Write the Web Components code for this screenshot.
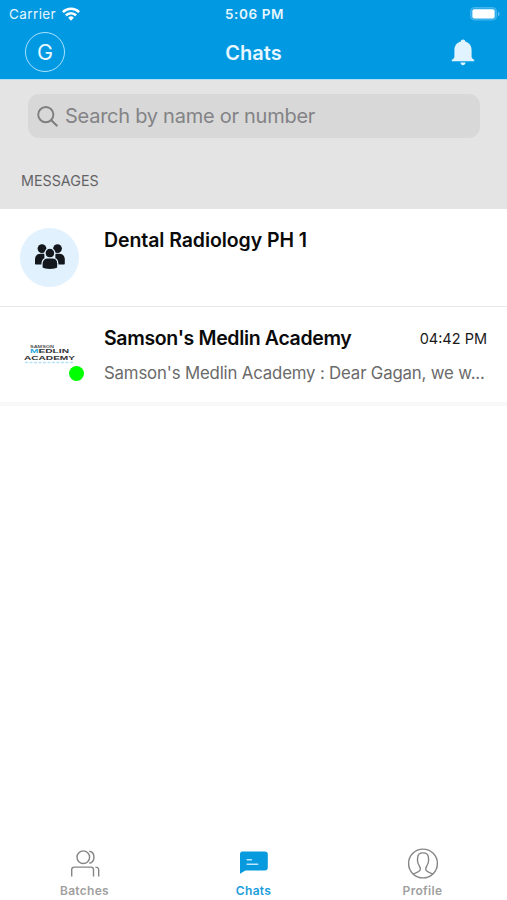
<!DOCTYPE html>
<html lang="en">
<head>
<meta charset="utf-8">
<meta name="viewport" content="width=device-width, initial-scale=1">
<title>Chats</title>
<style>
    html, body {
        margin: 0;
        height: 100%;
        overflow: hidden;
        background: #fff;
        font-family: Inter, "Liberation Sans", sans-serif;
    }
</style>
</head>
<body>
<chat-app></chat-app>

<script>
class StatusBar extends HTMLElement {
    connectedCallback() {
        let shadowRoot = this.attachShadow({ mode: 'open' });
        shadowRoot.innerHTML = `
        <style>
            :host {
                display: grid;
                grid-template-columns: 1fr auto 1fr;
                align-items: center;
                height: 27px;
                padding: 0 7px 0 9px;
                box-sizing: border-box;
                color: #e6f6ff;
                line-height: 27px;
            }
            .left {
                display: flex;
                align-items: center;
                gap: 6px;
            }
            .carrier { font-size: 13.5px; letter-spacing: 0.4px; padding-top: 1px; }
            .time { font-weight: 600; font-size: 13.5px; letter-spacing: 0.6px; padding-top: 1px; }
            .battery { justify-self: end; }
            svg { display: block; }
        </style>
        <div class="left">
            <span class="carrier">Carrier</span>
            <svg width="18" height="14" viewBox="0 0 18 14" fill="none" stroke="#fff" stroke-width="2.6">
                <path d="M0.9 5.2a11.4 11.4 0 0 1 16.2 0"/>
                <path d="M3.9 8.4a7.2 7.2 0 0 1 10.2 0"/>
                <path d="M9 13.8l-2.8-3.1a4 4 0 0 1 5.6 0z" fill="#fff" stroke="none"/>
            </svg>
        </div>
        <span class="time">5:06 PM</span>
        <svg class="battery" width="30" height="14" viewBox="0 0 30 14">
            <rect x="0.5" y="0.5" width="26" height="12.5" rx="3.8" fill="#2dabeb" stroke="#45b5ee"/>
            <rect x="2.4" y="2.2" width="22.2" height="9.2" rx="2" fill="#fff"/>
            <path d="M28 4.800c2 .9 2 3.500 0 4.400z" fill="#66c3f0"/>
        </svg>
        `;
    }
}

customElements.define("status-bar", StatusBar);


class NavBar extends HTMLElement {
    connectedCallback() {
        let shadowRoot = this.attachShadow({ mode: 'open' });
        shadowRoot.innerHTML = `
        <style>
            :host {
                display: grid;
                grid-template-columns: 1fr auto 1fr;
                align-items: center;
                height: 52px;
                padding: 0 32px 2px 25px;
                box-sizing: border-box;
                color: #e8f7ff;
            }
            .avatar {
                width: 40px;
                height: 40px;
                box-sizing: border-box;
                border: 1.5px solid #a9e2ff;
                border-radius: 50%;
                display: flex;
                align-items: center;
                justify-content: center;
                font-size: 21.5px;
            }
            .title { font-size: 20px; font-weight: 600; padding: 1px 0 0 7px; }
            .bell { justify-self: end; display: block; }
        </style>
        <div class="avatar">G</div>
        <div class="title"><slot></slot></div>
        <svg class="bell" width="24" height="27" viewBox="0 0 24 27" fill="#e0f3ff">
            <path d="M12 0.5c1.500 0 2.100.9 2.200 2.100 3.900 1 6.400 4.300 6.400 8.500v7.200l1.600 2.200h1v1.700H.8v-1.700h1l1.600-2.200v-7.200c0-4.200 2.500-7.500 6.400-8.500.1-1.200.7-2.100 2.200-2.100z"/>
            <path d="M9.400 23.400h5.200c-.3 1.800-1.300 2.800-2.600 2.800s-2.300-1-2.600-2.800z"/>
        </svg>
        `;
    }
}

customElements.define("nav-bar", NavBar);


class SearchBox extends HTMLElement {
    connectedCallback() {
        let shadowRoot = this.attachShadow({ mode: 'open' });
        shadowRoot.innerHTML = `
        <style>
            :host {
                display: flex;
                align-items: center;
                gap: 7px;
                height: 44px;
                margin: 0 27px 0 28px;
                padding-left: 9px;
                box-sizing: border-box;
                background: #d8d8d8;
                border-radius: 11px;
                color: #838386;
                font-size: 20px;
            }
            .label { letter-spacing: -0.26px; }
            svg { display: block; }
        </style>
        <svg width="21" height="21" viewBox="0 0 21 21" fill="none" stroke="#7f7f82" stroke-width="1.9" stroke-linecap="round">
            <circle cx="8.8" cy="8.6" r="7.600"/>
            <path d="M14.3 14.2l5.400 5.300" stroke-width="2.2"/>
        </svg>
        <span class="label"><slot></slot></span>
        `;
    }
}

customElements.define("search-box", SearchBox);


class ChatRow extends HTMLElement {
    connectedCallback() {
        let shadowRoot = this.attachShadow({ mode: 'open' });
        shadowRoot.innerHTML = `
        <style>
            :host {
                display: flex;
                gap: 25px;
                height: 98px;
                padding: 19px 20px 0 20px;
                box-sizing: border-box;
                border-bottom: 1px solid #e8e8e8;
                background: #fff;
            }
            :host([last]) {
                height: 99px;
                border-bottom: 4px solid #f8f8f8;
            }
            .body {
                flex: 1;
                min-width: 0;
            }
            .top {
                display: flex;
                justify-content: space-between;
                align-items: center;
                height: 24px;
            }
            .name {
                font-size: 19.5px;
                font-weight: 600;
                color: #0a0a0a;
                white-space: nowrap;
                letter-spacing: var(--name-spacing, -0.34px);
            }
            .time {
                font-size: 14.5px;
                color: #1a1a1a;
                white-space: nowrap;
            }
            .message {
                margin-top: 11px;
                height: 24px;
                line-height: 24px;
                font-size: 16.8px;
                letter-spacing: -0.16px;
                color: #6a6a6a;
                white-space: nowrap;
            }
        </style>
        <slot name="avatar"></slot>
        <div class="body">
            <div class="top">
                <span class="name"><slot name="name"></slot></span>
                <span class="time"><slot name="time"></slot></span>
            </div>
            <div class="message"><slot></slot></div>
        </div>
        `;
    }
}

customElements.define("chat-row", ChatRow);


class GroupAvatar extends HTMLElement {
    connectedCallback() {
        let shadowRoot = this.attachShadow({ mode: 'open' });
        shadowRoot.innerHTML = `
        <style>
            :host {
                display: flex;
                align-items: center;
                justify-content: center;
                flex: none;
                width: 59px;
                height: 59px;
                border-radius: 50%;
                background: #e1f1fe;
            }
            svg { display: block; margin-bottom: 1px; }
        </style>
        <svg width="32" height="28" viewBox="0 0 32 28" fill="#14181d">
            <circle cx="8" cy="5.6" r="4.4"/>
            <circle cx="23.5" cy="5.6" r="4.4"/>
            <path d="M1 20.8v-4.300c0-3.600 2.200-5.700 5.400-5.700h4v10.700h-8.600c-.5 0-.8-.3-.8-.7z"/>
            <path d="M30.8 20.8v-4.300c0-3.600-2.200-5.700-5.400-5.700h-4v10.700h8.600c.5 0 .8-.3.800-.7z"/>
            <g stroke="#e1f1fe" stroke-width="1.2">
                <circle cx="15.9" cy="10.1" r="4.9"/>
                <path d="M8 24.8v-4c0-3.800 2.300-5.800 5.500-5.800h4.800c3.200 0 5.500 2 5.500 5.800v4c-1.300 1-4.500 1.700-7.900 1.700s-6.600-.7-7.900-1.700z"/>
            </g>
        </svg>
        `;
    }
}

customElements.define("group-avatar", GroupAvatar);


class AcademyAvatar extends HTMLElement {
    connectedCallback() {
        let shadowRoot = this.attachShadow({ mode: 'open' });
        shadowRoot.innerHTML = `
        <style>
            :host {
                display: block;
                flex: none;
                position: relative;
                width: 59px;
                height: 59px;
            }
            .online {
                position: absolute;
                right: -5px;
                bottom: 4px;
                width: 15px;
                height: 15px;
                border-radius: 50%;
                background: #00ff00;
            }
            svg { display: block; }
            text { font-family: "Liberation Sans", sans-serif; font-weight: 700; }
        </style>
        <svg width="59" height="59" viewBox="0 0 59 59">
            <text x="10" y="21.7" font-size="3" fill="#555" textLength="24" lengthAdjust="spacingAndGlyphs">SAMSON</text>
            <text x="10" y="27.4" font-size="5.6" fill="#333" textLength="39" lengthAdjust="spacingAndGlyphs"><tspan fill="#29a9e0">M</tspan>EDLIN</text>
            <text x="4" y="33.7" font-size="5.6" fill="#333" textLength="51" lengthAdjust="spacingAndGlyphs">ACADEMY</text>
            <path d="M5 36.5h49" stroke="#b5e2f6" stroke-width="1.4" stroke-dasharray="3 1.5"/>
        </svg>
        <div class="online"></div>
        `;
    }
}

customElements.define("academy-avatar", AcademyAvatar);


class TabItem extends HTMLElement {
    connectedCallback() {
        let shadowRoot = this.attachShadow({ mode: 'open' });
        shadowRoot.innerHTML = `
        <style>
            :host {
                display: flex;
                flex-direction: column;
                align-items: center;
                flex: 1;
                color: #a0a0a0;
            }
            :host([active]) { color: #1c9ddb; }
            .icon {
                height: 32px;
                display: flex;
                align-items: center;
            }
            .label {
                margin-top: 4px;
                font-size: 12px;
                line-height: 16px;
                font-weight: 600;
                letter-spacing: 0.3px;
            }
        </style>
        <div class="icon"><slot name="icon"></slot></div>
        <div class="label"><slot></slot></div>
        `;
    }
}

customElements.define("tab-item", TabItem);


class TabBar extends HTMLElement {
    connectedCallback() {
        let shadowRoot = this.attachShadow({ mode: 'open' });
        shadowRoot.innerHTML = `
        <style>
            :host {
                display: flex;
                height: 53px;
                background: #fff;
            }
            svg { display: block; fill: none; stroke: #858585; stroke-width: 1.4; }
        </style>
        <tab-item>
            <svg slot="icon" width="32" height="32" viewBox="0 0 32 32">
                <circle cx="14.3" cy="10.2" r="6.3"/>
                <path d="M20.300 4.300c6.200 1.100 6.200 10.600 0 11.900"/>
                <path d="M2.700 29.500v-6.800q0-2.600 2.600-2.600h16.600q2.600 0 2.600 2.600v6.800"/>
                <path d="M26.400 20.100q3.300 0 3.300 3v6.400"/>
            </svg>
            Batches
        </tab-item>
        <tab-item active>
            <svg slot="icon" width="32" height="32" viewBox="0 0 32 32">
                <path d="M4.500 4.600h22.300c2 0 3 1.100 3 3v13c0 2-1 3-3 3H7.400L2 26.800V7.500c0-1.900.8-2.900 2.500-2.900z" fill="#079ade" stroke="none"/>
                <path d="M9.200 12.700h4.200M9.200 17.300h10.500" stroke="#b9e8ff" stroke-width="1.600" stroke-linecap="round"/>
            </svg>
            Chats
        </tab-item>
        <tab-item>
            <svg slot="icon" width="32" height="32" viewBox="0 0 32 32">
                <circle cx="16" cy="16.5" r="14.4"/>
                <path d="M6.300 27.200c1.500-1.600 5.300-1.800 6.500-3.500.9-1.300.4-3.200-.4-4.500-1.300-1.900-2-3.500-1.900-5.800l.1-2.500c.1-3.400 2-5 5.400-5s5.400 1.600 5.500 5l.1 2.500c.1 2.300-.6 3.900-1.900 5.800-.8 1.300-1.300 3.200-.4 4.500 1.200 1.700 5 1.900 6.500 3.500"/>
            </svg>
            Profile
        </tab-item>
        `;
    }
}

customElements.define("tab-bar", TabBar);


class ChatApp extends HTMLElement {
    connectedCallback() {
        let shadowRoot = this.attachShadow({ mode: 'open' });
        shadowRoot.innerHTML = `
        <style>
            :host {
                display: flex;
                flex-direction: column;
                height: 100vh;
                overflow: hidden;
            }
            header { background: #019ae2; flex: none; }
            .filters {
                flex: none;
                height: 130px;
                box-sizing: border-box;
                padding-top: 14px;
                border-top: 1px solid #b4def2;
                background: #e4e4e4;
            }
            h2 {
                margin: 34px 0 0 21px;
                font-size: 14.3px;
                line-height: 18px;
                font-weight: 400;
                color: #636366;
            }
            main { flex: 1; min-height: 0; }
            .group { --name-spacing: -0.08px; }
            tab-bar { flex: none; }
        </style>
        <header>
            <status-bar></status-bar>
            <nav-bar>Chats</nav-bar>
        </header>
        <section class="filters">
            <search-box>Search by name or number</search-box>
            <h2>MESSAGES</h2>
        </section>
        <main>
            <chat-row class="group">
                <group-avatar slot="avatar"></group-avatar>
                <span slot="name">Dental Radiology PH 1</span>
            </chat-row>
            <chat-row last>
                <academy-avatar slot="avatar"></academy-avatar>
                <span slot="name">Samson's Medlin Academy</span>
                <span slot="time">04:42 PM</span>
                Samson's Medlin Academy : Dear Gagan, we w...
            </chat-row>
        </main>
        <tab-bar></tab-bar>
        `;
    }
}

customElements.define("chat-app", ChatApp);
</script>
</body>
</html>
